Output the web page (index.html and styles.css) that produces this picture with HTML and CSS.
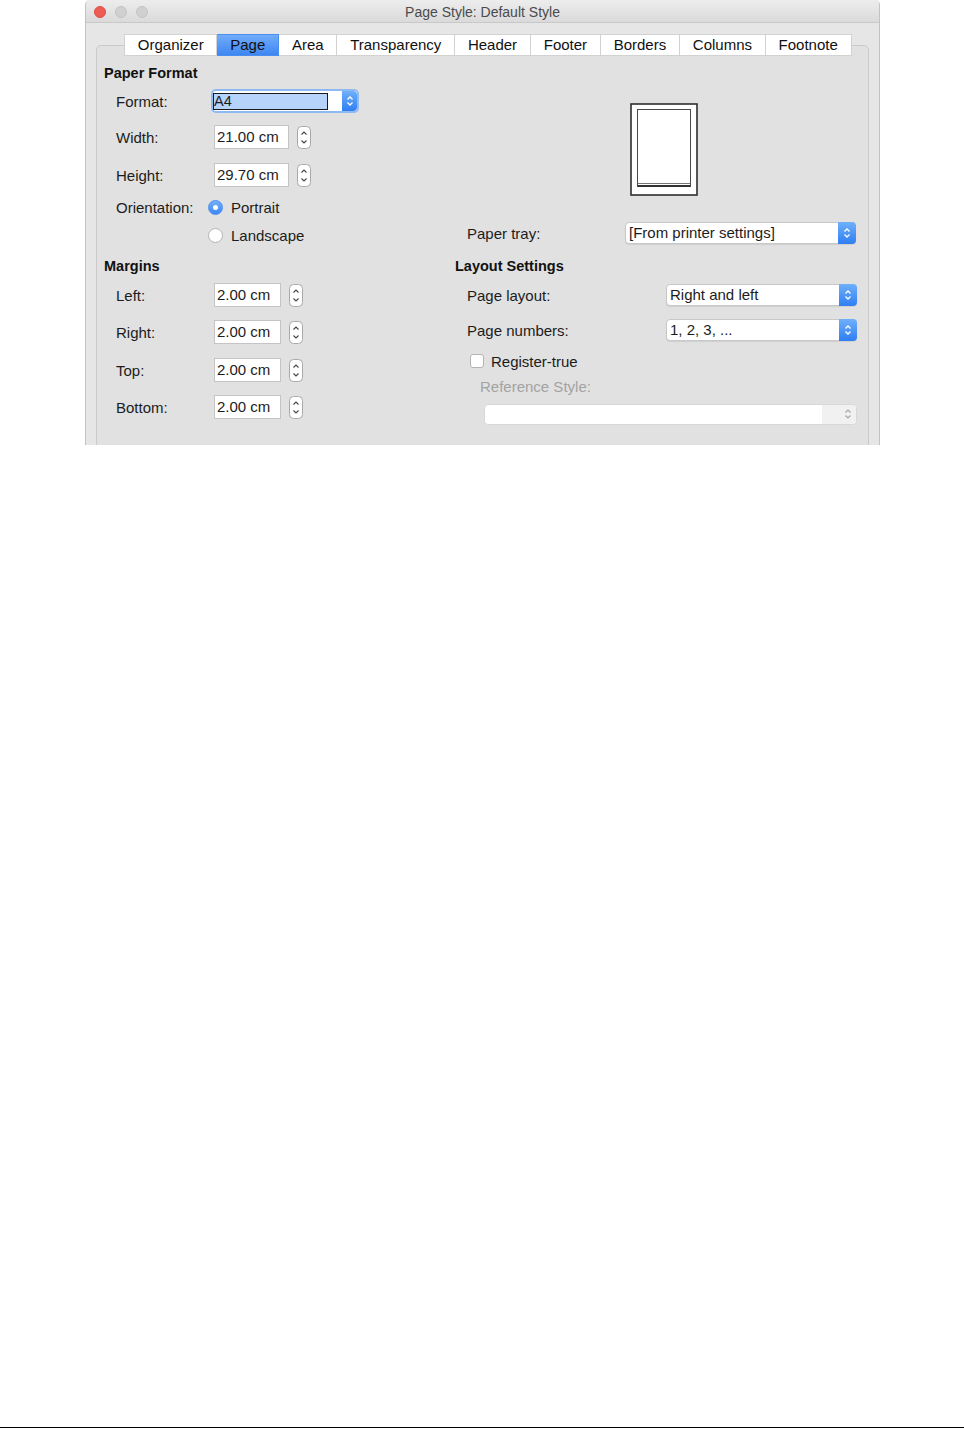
FILE: index.html
```html
<!DOCTYPE html>
<html lang="en">
<head>
    <meta charset="UTF-8">
    <title>Page Style: Default Style</title>
    <link rel="stylesheet" href="styles.css">
</head>
<body>
<div class="page">
    <div class="window">
        <div class="titlebar">
            <div class="lights">
                <span class="light close"></span>
                <span class="light"></span>
                <span class="light"></span>
            </div>
            <div class="title">Page Style: Default Style</div>
            <div></div>
        </div>

        <div class="window-body">
            <div class="panel">
                <div class="tabs">
                    <div class="tab">Organizer</div>
                    <div class="tab active">Page</div>
                    <div class="tab">Area</div>
                    <div class="tab">Transparency</div>
                    <div class="tab">Header</div>
                    <div class="tab">Footer</div>
                    <div class="tab">Borders</div>
                    <div class="tab">Columns</div>
                    <div class="tab">Footnote</div>
                </div>

                <div class="content">
                    <!-- paper format, left -->
                    <div class="col paper-left">
                        <div class="heading">Paper Format</div>
                        <div class="field">
                            <span class="label">Format:</span>
                            <div class="combo focus">
                                <span class="combo-sel">A4</span>
                                <span class="blue-btn">
                                    <svg width="8" height="12" viewBox="0 0 8 12"><path d="M1.5 4.5 L4 2 L6.5 4.5 M1.5 7.5 L4 10 L6.5 7.5" fill="none" stroke="#fff" stroke-width="1.3"/></svg>
                                </span>
                            </div>
                        </div>
                        <div class="field">
                            <span class="label">Width:</span>
                            <span class="num">21.00 cm</span>
                            <svg class="spin" width="14" height="23" viewBox="0 0 14 23"><rect x="0.5" y="0.5" width="13" height="22" rx="4" fill="#fff" stroke="#a9a9a9"/><path d="M4.5 8.5 L7 6 L9.5 8.5 M4.5 14.5 L7 17 L9.5 14.5" fill="none" stroke="#444" stroke-width="1.1"/></svg>
                        </div>
                        <div class="field">
                            <span class="label">Height:</span>
                            <span class="num">29.70 cm</span>
                            <svg class="spin" width="14" height="23" viewBox="0 0 14 23"><rect x="0.5" y="0.5" width="13" height="22" rx="4" fill="#fff" stroke="#a9a9a9"/><path d="M4.5 8.5 L7 6 L9.5 8.5 M4.5 14.5 L7 17 L9.5 14.5" fill="none" stroke="#444" stroke-width="1.1"/></svg>
                        </div>
                        <div class="field">
                            <span class="label">Orientation:</span>
                            <span class="radio on"></span>
                            <span class="opt">Portrait</span>
                        </div>
                        <div class="field">
                            <span class="label"></span>
                            <span class="radio"></span>
                            <span class="opt">Landscape</span>
                        </div>
                    </div>

                    <!-- paper format, right -->
                    <div class="col paper-right">
                        <svg class="preview" width="68" height="93" viewBox="0 0 68 93">
                            <rect x="1" y="1" width="66" height="91" fill="#fff" stroke="#2e2e2e" stroke-width="1.6"/>
                            <rect x="7.5" y="6.5" width="53" height="77" fill="#fff" stroke="#4a4a4a"/>
                            <path d="M8 80.5 H60" stroke="#777" stroke-width="1"/>
                            <path d="M8 83 H60" stroke="#333" stroke-width="2"/>
                        </svg>
                        <div class="field tray">
                            <span class="label">Paper tray:</span>
                            <div class="popup">
                                <span class="popup-text">[From printer settings]</span>
                                <span class="blue-btn">
                                    <svg width="8" height="12" viewBox="0 0 8 12"><path d="M1.5 4.5 L4 2 L6.5 4.5 M1.5 7.5 L4 10 L6.5 7.5" fill="none" stroke="#fff" stroke-width="1.3"/></svg>
                                </span>
                            </div>
                        </div>
                    </div>

                    <!-- margins -->
                    <div class="col margins">
                        <div class="heading">Margins</div>
                        <div class="field">
                            <span class="label">Left:</span>
                            <span class="num short">2.00 cm</span>
                            <svg class="spin" width="14" height="23" viewBox="0 0 14 23"><rect x="0.5" y="0.5" width="13" height="22" rx="4" fill="#fff" stroke="#a9a9a9"/><path d="M4.5 8.5 L7 6 L9.5 8.5 M4.5 14.5 L7 17 L9.5 14.5" fill="none" stroke="#444" stroke-width="1.1"/></svg>
                        </div>
                        <div class="field">
                            <span class="label">Right:</span>
                            <span class="num short">2.00 cm</span>
                            <svg class="spin" width="14" height="23" viewBox="0 0 14 23"><rect x="0.5" y="0.5" width="13" height="22" rx="4" fill="#fff" stroke="#a9a9a9"/><path d="M4.5 8.5 L7 6 L9.5 8.5 M4.5 14.5 L7 17 L9.5 14.5" fill="none" stroke="#444" stroke-width="1.1"/></svg>
                        </div>
                        <div class="field">
                            <span class="label">Top:</span>
                            <span class="num short">2.00 cm</span>
                            <svg class="spin" width="14" height="23" viewBox="0 0 14 23"><rect x="0.5" y="0.5" width="13" height="22" rx="4" fill="#fff" stroke="#a9a9a9"/><path d="M4.5 8.5 L7 6 L9.5 8.5 M4.5 14.5 L7 17 L9.5 14.5" fill="none" stroke="#444" stroke-width="1.1"/></svg>
                        </div>
                        <div class="field">
                            <span class="label">Bottom:</span>
                            <span class="num short">2.00 cm</span>
                            <svg class="spin" width="14" height="23" viewBox="0 0 14 23"><rect x="0.5" y="0.5" width="13" height="22" rx="4" fill="#fff" stroke="#a9a9a9"/><path d="M4.5 8.5 L7 6 L9.5 8.5 M4.5 14.5 L7 17 L9.5 14.5" fill="none" stroke="#444" stroke-width="1.1"/></svg>
                        </div>
                    </div>

                    <!-- layout settings -->
                    <div class="col layout">
                        <div class="heading">Layout Settings</div>
                        <div class="field row22">
                            <span class="label wide">Page layout:</span>
                            <div class="popup layout-popup">
                                <span class="popup-text">Right and left</span>
                                <span class="blue-btn">
                                    <svg width="8" height="12" viewBox="0 0 8 12"><path d="M1.5 4.5 L4 2 L6.5 4.5 M1.5 7.5 L4 10 L6.5 7.5" fill="none" stroke="#fff" stroke-width="1.3"/></svg>
                                </span>
                            </div>
                        </div>
                        <div class="field row22">
                            <span class="label wide">Page numbers:</span>
                            <div class="popup layout-popup">
                                <span class="popup-text">1, 2, 3, ...</span>
                                <span class="blue-btn">
                                    <svg width="8" height="12" viewBox="0 0 8 12"><path d="M1.5 4.5 L4 2 L6.5 4.5 M1.5 7.5 L4 10 L6.5 7.5" fill="none" stroke="#fff" stroke-width="1.3"/></svg>
                                </span>
                            </div>
                        </div>
                        <div class="field row22 check-row">
                            <span class="checkbox"></span>
                            <span class="opt">Register-true</span>
                        </div>
                        <div class="field row22 muted">Reference Style:</div>
                        <div class="field row22 disabled-row">
                            <div class="popup disabled">
                                <span class="popup-text"></span>
                                <span class="grey-btn">
                                    <svg width="8" height="12" viewBox="0 0 8 12"><path d="M1.5 4.5 L4 2 L6.5 4.5 M1.5 7.5 L4 10 L6.5 7.5" fill="none" stroke="#a5a5a5" stroke-width="1.2"/></svg>
                                </span>
                            </div>
                        </div>
                    </div>
                </div>
            </div>
        </div>
    </div>

    <div class="rule"></div>
</div>
</body>
</html>
```

FILE: styles.css
```css
body {
    margin: 0;
    font-family: "Liberation Sans", Arial, sans-serif;
    font-size: 15px;
    color: #1c1c1c;
    background: #fff;
}
.page {
    height: 1429px;
    display: flex;
    flex-direction: column;
}
.rule {
    margin-top: auto;
    margin-bottom: 1px;
    height: 1px;
    background: #000;
}

/* window chrome */
.window {
    margin-left: 85px;
    width: 795px;
    height: 445px;
    box-sizing: border-box;
    border-left: 1px solid #c2c2c2;
    border-right: 1px solid #c2c2c2;
    border-radius: 5px 5px 0 0;
    background: #e6e6e6;
    overflow: hidden;
}
.titlebar {
    height: 23px;
    box-sizing: border-box;
    padding-top: 2px;
    border-bottom: 1px solid #c9c9c9;
    background: linear-gradient(#ededed, #dadada);
    display: grid;
    grid-template-columns: 1fr auto 1fr;
    align-items: center;
}
.lights {
    display: flex;
    gap: 9px;
    padding-left: 8px;
}
.light {
    width: 12px;
    height: 12px;
    box-sizing: border-box;
    border-radius: 50%;
    background: #d0d0d0;
    border: 1px solid #c4c4c4;
}
.light.close {
    background: #ee5d55;
    border-color: #de4c44;
}
.title {
    font-size: 14px;
    color: #4b4b4b;
}
.window-body {
    padding: 22px 10px 0 10px;
}

/* tab panel */
.panel {
    height: 420px;
    box-sizing: border-box;
    border: 1px solid #cacaca;
    border-radius: 5px;
    background: #e1e1e1;
    padding-left: 7px;
}
.tabs {
    display: flex;
    height: 22px;
    margin: -12px 0 0 20px;
}
.tab {
    background: #fff;
    border: 1px solid #d2d2d2;
    border-left: none;
    padding: 0 12.8px;
    line-height: 20px;
    color: #111;
}
.tab:first-child {
    border-left: 1px solid #d2d2d2;
}
.tab.active {
    background: linear-gradient(#72acf9, #3d86f3);
    border-color: #4a8ef0;
}

.content {
    display: grid;
    grid-template-columns: 351px 1fr;
    grid-template-rows: 193px auto;
    margin-top: 8px;
}
.col {
    display: grid;
    align-items: start;
}
.paper-left {
    grid-template-rows: 25px 36px 38px 32px 28px 24px;
}
.margins {
    grid-template-rows: 26px 37px 38px 37px 24px;
}
.layout {
    grid-template-rows: 27px 35px 31px 25px 28px 22px;
}
.paper-right {
    display: block;
}

.heading {
    font-weight: bold;
    font-size: 14.5px;
    line-height: 18px;
    color: #111;
}
.field {
    display: flex;
    align-items: center;
    height: 24px;
    padding-left: 12px;
}
.row22 {
    height: 22px;
}
.label {
    width: 95px;
    flex: none;
}
.label.wide {
    width: 199px;
}

/* number fields */
.num {
    width: 75px;
    height: 24px;
    box-sizing: border-box;
    margin-left: 3px;
    padding-left: 2px;
    background: #fff;
    border: 1px solid #c4c4c4;
    line-height: 22px;
}
.num.short {
    width: 67px;
}
.spin {
    margin-left: 8px;
}

/* focused format combo */
.combo {
    display: flex;
    align-items: center;
    width: 144px;
    height: 20px;
    margin-left: 2px;
    background: #fff;
    border-radius: 3px;
}
.combo.focus {
    box-shadow: 0 0 0 2px #8fb9f3;
}
.combo-sel {
    width: 115px;
    height: 17px;
    box-sizing: border-box;
    border: 1px solid #1a1a1a;
    background: #b6d3fb;
    line-height: 15px;
    font-size: 14.5px;
}
.combo .blue-btn {
    margin-left: auto;
    width: 15px;
    height: 20px;
}

.blue-btn {
    display: flex;
    align-items: center;
    justify-content: center;
    width: 18px;
    flex: none;
    background: linear-gradient(#6fb0fb, #2f7ef2);
    border-radius: 0 4px 4px 0;
}

/* popups */
.popup {
    display: flex;
    height: 22px;
    box-sizing: border-box;
    background: #fff;
    border: 1px solid #c8c8c8;
    border-radius: 4px;
    box-shadow: 0 1px 1px rgba(0, 0, 0, 0.08);
}
.popup .blue-btn {
    margin: -1px -1px -1px auto;
}
.popup-text {
    padding-left: 3px;
    line-height: 20px;
    white-space: nowrap;
}

/* radios and checkbox */
.radio {
    width: 15px;
    height: 15px;
    box-sizing: border-box;
    margin-left: -3px;
    border-radius: 50%;
    background: #fff;
    border: 1px solid #b3b3b3;
    display: flex;
    align-items: center;
    justify-content: center;
}
.radio.on {
    background: linear-gradient(#74affa, #3c86f4);
    border-color: #4b8ef2;
}
.radio.on::after {
    content: "";
    width: 5px;
    height: 5px;
    border-radius: 50%;
    background: #fff;
}
.opt {
    margin-left: 8px;
}
.checkbox {
    width: 14px;
    height: 14px;
    box-sizing: border-box;
    background: #fff;
    border: 1px solid #b3b3b3;
    border-radius: 3px;
}
.check-row {
    padding-left: 15px;
}
.check-row .opt {
    margin-left: 7px;
}

/* paper preview and tray */
.preview {
    display: block;
    margin: 39px 0 0 175px;
}
.tray {
    height: 22px;
    margin-top: 26px;
}
.tray .label {
    width: 158px;
}
.tray .popup {
    width: 231px;
}
.layout-popup {
    width: 191px;
}

/* disabled reference style */
.muted {
    color: #a3a3a3;
    padding-left: 25px;
}
.disabled-row {
    padding-left: 29px;
}
.popup.disabled {
    width: 373px;
    height: 21px;
    border-color: #d8d8d8;
    box-shadow: none;
}
.grey-btn {
    display: flex;
    align-items: center;
    justify-content: flex-end;
    width: 30px;
    margin-left: auto;
    padding-right: 4px;
    background: #f1f1f1;
    border-radius: 0 4px 4px 0;
}
```
